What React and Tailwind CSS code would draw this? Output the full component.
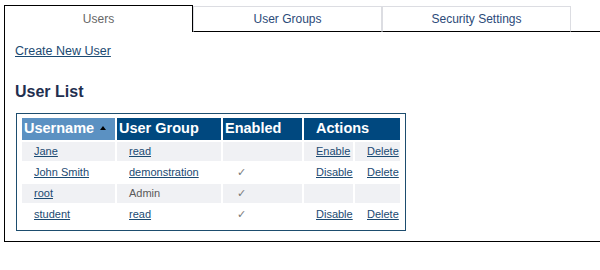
import React from "react";

const font = { fontFamily: '"Liberation Sans", Arial, sans-serif' };

const rows = [
  { name: "Jane", group: "read", groupLink: true, enabled: false, a1: "Enable", a2: "Delete" },
  { name: "John Smith", group: "demonstration", groupLink: true, enabled: true, a1: "Disable", a2: "Delete" },
  { name: "root", group: "Admin", groupLink: false, enabled: true, a1: "", a2: "" },
  { name: "student", group: "read", groupLink: true, enabled: true, a1: "Disable", a2: "Delete" },
];

function Check() {
  return (
    <span className="text-[11px] text-[#7a7a7a]" style={{ fontFamily: '"DejaVu Sans", sans-serif' }}>
      ✓
    </span>
  );
}

export default function App() {
  return (
    <div className="w-[600px] h-[270px] bg-white font-['Liberation_Sans',Arial,sans-serif]" style={font}>
      <div className="pt-[5px] pl-[4px] flex items-end">
        <div className="w-[189px] h-[27px] border-l border-t border-r border-black flex items-center justify-center text-[12px] text-[#666666] pb-[1px]">
          Users
        </div>
        <div className="w-[189px] h-[26px] border-t border-l border-r border-[#dcdde2] border-b border-b-black flex items-center justify-center text-[12px] text-[#2b4a78]">
          User Groups
        </div>
        <div className="w-[189px] h-[26px] border-t border-l border-r border-[#dcdde2] border-b border-b-black flex items-center justify-center text-[12px] text-[#2b4a78]">
          Security Settings
        </div>
        <div className="flex-1 h-[26px] border-b border-black" />
      </div>
      <div className="ml-[4px] h-[210px] border-l border-b border-black pl-[10px] pt-[12px]">
        <a href="#" className="block w-fit text-[12.5px] leading-[15px] text-[#1b4a72] underline">
          Create New User
        </a>
        <h2 className="mt-[24px] text-[16px] leading-[18px] font-bold text-[#1f2f4f]">User List</h2>
        <div className="mt-[12px] ml-[1px] w-[390px] border border-[#1d4d6e] pt-[2px] px-[3px] pb-[4px]">
          <table className="table-fixed border-separate border-spacing-[2px] w-[382px]">
            <colgroup>
              <col className="w-[93px]" />
              <col className="w-[104px]" />
              <col className="w-[79px]" />
              <col className="w-[49px]" />
              <col className="w-[45px]" />
            </colgroup>
            <thead>
              <tr className="h-[21px]">
                <th className="bg-[#5b91c2] text-white text-left font-bold text-[14.5px] pl-[2px] p-0 whitespace-nowrap">
                  Username
                  <span className="inline-block ml-[6px] align-middle mb-[3px] w-0 h-0 border-l-[3.5px] border-r-[3.5px] border-b-[4px] border-l-transparent border-r-transparent border-b-black" />
                </th>
                <th className="bg-[#00487f] text-white text-left font-bold text-[14.5px] pl-[2px] p-0 whitespace-nowrap">User Group</th>
                <th className="bg-[#00487f] text-white text-left font-bold text-[14.5px] pl-[2px] p-0 whitespace-nowrap">Enabled</th>
                <th colSpan={2} className="bg-[#00487f] text-white text-left font-bold text-[14.5px] pl-[12px] p-0 whitespace-nowrap">Actions</th>
              </tr>
            </thead>
            <tbody>
              {rows.map((r, i) => {
                const bg = i % 2 === 0 ? "bg-[#f0f1f4]" : "bg-white";
                return (
                  <tr key={r.name} className="h-[19px] text-[11px]">
                    <td className={`${bg} pl-[12px] p-0`}>
                      <a href="#" className="text-[#1b4a72] underline">{r.name}</a>
                    </td>
                    <td className={`${bg} pl-[12px] p-0`}>
                      {r.groupLink ? (
                        <a href="#" className="text-[#1b4a72] underline">{r.group}</a>
                      ) : (
                        <span className="text-[#5a5a5a]">{r.group}</span>
                      )}
                    </td>
                    <td className={`${bg} pl-[14px] p-0`}>{r.enabled ? <Check /> : null}</td>
                    <td className={`${bg} pl-[12px] p-0`}>
                      {r.a1 ? <a href="#" className="text-[#1b4a72] underline">{r.a1}</a> : null}
                    </td>
                    <td className={`${bg} pl-[12px] p-0`}>
                      {r.a2 ? <a href="#" className="text-[#1b4a72] underline">{r.a2}</a> : null}
                    </td>
                  </tr>
                );
              })}
            </tbody>
          </table>
        </div>
      </div>
    </div>
  );
}
